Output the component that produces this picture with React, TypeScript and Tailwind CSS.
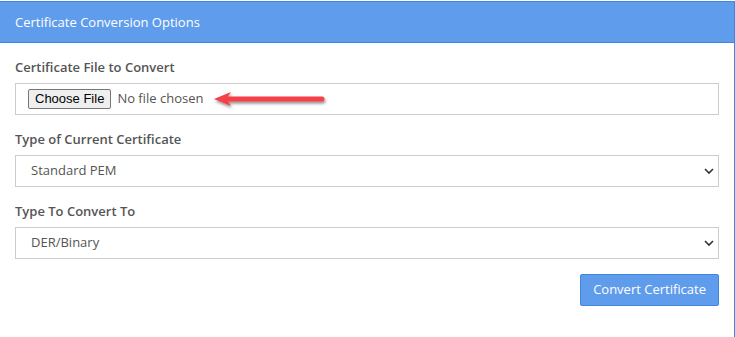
import { useState } from "react";

function Chevron() {
  return (
    <svg width="10" height="7" viewBox="0 0 10 7" className="pointer-events-none absolute right-[5px] top-1/2 -translate-y-1/2">
      <path d="M1 1.5 L5 5.5 L9 1.5" fill="none" stroke="#333" strokeWidth="1.6" />
    </svg>
  );
}

function SelectField({
  label,
  options,
}: {
  label: string;
  options: string[];
}) {
  const [value, setValue] = useState(options[0]);
  return (
    <div className="mb-[15px]">
      <label className="block text-[13px] font-semibold text-[#555] leading-[18px] mb-[7px]">{label}</label>
      <div className="relative">
        <select
          value={value}
          onChange={(e) => setValue(e.target.value)}
          className="block w-full h-[32px] appearance-none border border-[#ccc] bg-white pl-[15px] pr-6 text-[13px] text-[#555] outline-none"
        >
          {options.map((o) => (
            <option key={o}>{o}</option>
          ))}
        </select>
        <Chevron />
      </div>
    </div>
  );
}

export default function App() {
  return (
    <div className="w-[735px] h-[337px] bg-white pt-[1px] font-['Open_Sans',sans-serif]">
      <div className="ml-[-1px] w-[736px] h-[340px] border border-t-0 border-[#3f86e2] bg-white">
        <div className="h-[42px] bg-[#5f9ceb] border-t border-b border-[#3f86e2] flex items-center px-[15px]">
          <h2 className="text-white text-[13px] leading-none">Certificate Conversion Options</h2>
        </div>
        <div className="pl-[15px] pr-[15px] pt-[15px]">
          <div className="mb-[15px]">
            <label className="block text-[13px] font-semibold text-[#555] leading-[18px] mb-[7px]">
              Certificate File to Convert
            </label>
            <div className="relative h-[32px] border border-[#ccc] flex items-center pl-[12px]">
              <span className="font-['Liberation_Sans',sans-serif] text-[13px] text-black bg-[#efefef] border border-[#767676] rounded-[2px] h-[20px] px-[6px] flex items-center">
                Choose File
              </span>
              <span className="ml-[6px] text-[13px] text-[#555]">No file chosen</span>
              <svg width="124" height="26" viewBox="0 0 124 26" className="absolute left-[194px] top-[3px]">
                <defs>
                  <filter id="sh" x="-10%" y="-50%" width="120%" height="200%">
                    <feDropShadow dx="1" dy="2" stdDeviation="1.6" floodColor="#000" floodOpacity="0.45" />
                  </filter>
                </defs>
                <g filter="url(#sh)">
                  <path d="M4 12 L21 5 L18 9.5 L112 9.5 A2.5 2.5 0 0 1 112 14.5 L18 14.5 L21 19 Z" fill="#f43f48" strokeLinejoin="round" />
                </g>
              </svg>
            </div>
          </div>
          <SelectField label="Type of Current Certificate" options={["Standard PEM", "DER/Binary", "P7B/PKCS#7", "PFX/PKCS#12"]} />
          <SelectField label="Type To Convert To" options={["DER/Binary", "Standard PEM", "P7B/PKCS#7", "PFX/PKCS#12"]} />
          <div className="flex justify-end mt-[1px]">
            <button className="h-[32px] px-[12px] bg-[#5f9ceb] border border-[#3f86e2] rounded-[2px] text-white text-[13px]">
              Convert Certificate
            </button>
          </div>
        </div>
      </div>
    </div>
  );
}
